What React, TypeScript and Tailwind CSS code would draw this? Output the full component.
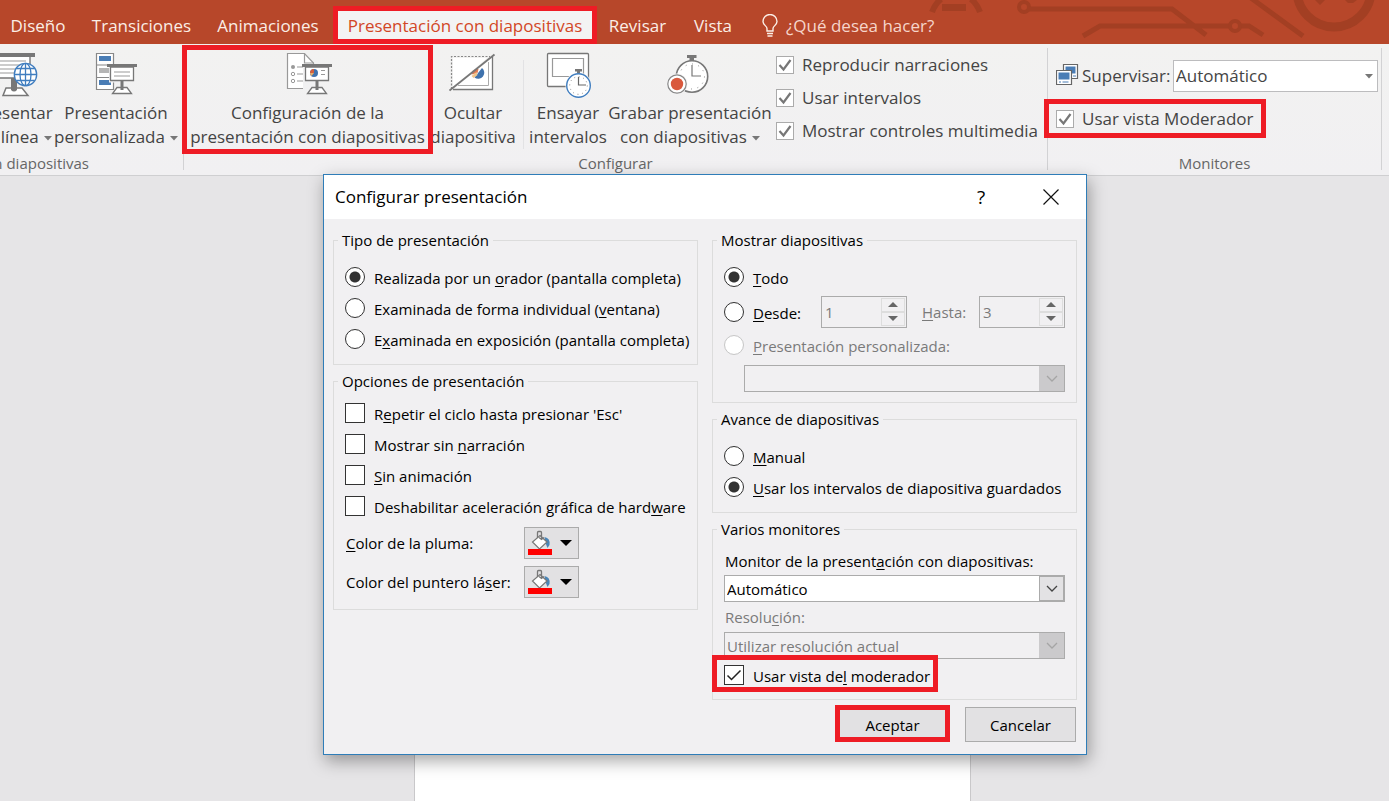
import React from "react";
import clsx from "clsx";

function Highlight({ className }: { className: string }) {
  return (
    <span
      aria-hidden="true"
      className={clsx("pointer-events-none absolute z-10 border-[5px] border-[#ee1c25]", className)}
    />
  );
}

function Board({ x, y }: { x: number; y: number }) {
  return (
    <g transform={`translate(${x} ${y})`}>
      <path d="M10 23.500h10l4.500 6H5.500z" fill="#fff" stroke="#777" strokeWidth="1.300" />
      <path d="M13.500 17h3v9h-3z" fill="#777" />
      <path d="M3.500 3h23v13.500h-23z" fill="#fff" stroke="#777" strokeWidth="1.300" />
      <path d="M0 0h30v3H0z" fill="#777" />
    </g>
  );
}

function RibbonIcon({ children }: { children: React.ReactNode }) {
  return (
    <svg width="48" height="48" viewBox="0 0 48 48" fill="none" aria-hidden="true" className="shrink-0">
      {children}
    </svg>
  );
}

const OnlineIcon = () => (
  <RibbonIcon>
    <path d="M16 36h16l6 7.500H13z" fill="#fff" stroke="#777" strokeWidth="1.500" />
    <path d="M21 26h6v12q-3 3-6 0z" fill="#777" />
    <path d="M6 4h34v22H6z" fill="#fff" stroke="#777" strokeWidth="1.400" />
    <path d="M3 1h42v4H3z" fill="#777" />
    <path d="M10 9h26M10 13h22M10 17h18M10 21h16" stroke="#999" />
    <g stroke="#3f7dbf" strokeWidth="1.300" fill="#fff">
      <circle cx="35.500" cy="22.500" r="11.200" />
      <ellipse cx="35.500" cy="22.500" rx="5.500" ry="11.200" />
      <path d="M35.500 11.300v22.400M24.300 22.500h22.400M26.500 16.500h18M26.500 28.500h18" />
    </g>
  </RibbonIcon>
);

const CustomShowIcon = () => (
  <RibbonIcon>
    <path d="M4.500 1.500h17v36h-17z" fill="#fff" stroke="#888" strokeWidth="1.200" />
    <path d="M4.500 13h17M4.500 25.500h17" stroke="#888" strokeWidth="1.200" />
    <path d="M7 4h12v5H7zM7 28h12v5H7z" fill="#4a7db5" />
    <path d="M7 16h11v5H7z" fill="#b5b5b5" />
    <path d="M17 14.500h13v16H17z" fill="#f1f1f2" />
    <Board x={15} y={12} />
    <path d="M22 20h16M22 24h16" stroke="#999" />
  </RibbonIcon>
);

const SetupIcon = () => (
  <RibbonIcon>
    <path d="M3.500 1.500h17l9 9.500v25.500h-26z" fill="#fff" stroke="#999" strokeWidth="1.200" />
    <path d="M20.500 1.500V11h9" stroke="#999" strokeWidth="1.200" />
    <path d="M19 15h12v22.500H19z" fill="#f1f1f2" />
    <circle cx="9" cy="15" r="2" fill="#999" />
    <circle cx="9" cy="22" r="1.700" stroke="#999" />
    <circle cx="9" cy="29" r="1.700" stroke="#999" />
    <path d="M13 15h6M13 22h6M13 29h6" stroke="#999" />
    <Board x={18} y={12} />
    <circle cx="30" cy="21" r="4" fill="#3f72ad" />
    <path d="M30 21v-4a4 4 0 0 0-4 4z" fill="#d35f3e" />
    <path d="M30 21h-4a4 4 0 0 0 1.500 3z" fill="#e8b06a" />
    <path d="M37 18.500h4M37 22.500h4" stroke="#999" />
  </RibbonIcon>
);

const HideIcon = () => (
  <RibbonIcon>
    <path d="M2.500 37V4.500H41" stroke="#888" strokeWidth="1.200" strokeDasharray="2 1.500" />
    <path d="M4 36V6h34z" fill="#fff" />
    <path d="M44 4v33.500H4z" fill="#fff" />
    <path d="M43.500 5v32.500H4" stroke="#777" strokeWidth="1.300" />
    <path d="M39.500 10v23.500H9" stroke="#aaa" />
    <path d="M33 16a6 6 0 1 1-7.500 9.500z" fill="#3f72ad" />
    <path d="M22.500 22.500a6 6 0 0 1 7-5.500l-1 4z" fill="#e07a52" />
    <path d="M22.500 24l5-4 1 3-4 3z" fill="#efc58c" />
    <path d="M0.500 38.500L45.500 2.500" stroke="#777" strokeWidth="1.800" />
  </RibbonIcon>
);

const RehearseIcon = () => (
  <RibbonIcon>
    <rect x="3.500" y="1.500" width="41" height="33" rx="1" fill="#fff" stroke="#777" strokeWidth="1.300" />
    <path d="M8.500 6.500h31v18h-31z" stroke="#999" strokeWidth="1.200" />
    <circle cx="34.500" cy="33.500" r="13" fill="#f4f4f5" />
    <path d="M31 17h7v2.500h-2v2h-3v-2h-2z" fill="#777" />
    <circle cx="34.500" cy="33.500" r="11.800" fill="#fff" stroke="#3f7dbf" strokeWidth="1.400" />
    <circle cx="34.500" cy="33.500" r="8.800" stroke="#888" strokeDasharray="1 3.600" />
    <path d="M34.500 25v8H42" stroke="#666" strokeWidth="1.200" />
  </RibbonIcon>
);

const RecordIcon = () => (
  <RibbonIcon>
    <path d="M21 3h9.500v3H28v3h-4.500V6H21z" fill="#777" />
    <circle cx="26" cy="24.500" r="15.700" fill="#fff" stroke="#777" strokeWidth="1.600" />
    <circle cx="26" cy="24.500" r="12.500" stroke="#888" strokeDasharray="1 5.500" />
    <path d="M26 13v11h9" stroke="#777" strokeWidth="1.200" />
    <circle cx="11" cy="32" r="10.500" fill="#f4f4f5" />
    <circle cx="11" cy="32" r="9.200" fill="#fff" stroke="#888" strokeWidth="1.200" />
    <circle cx="11" cy="32" r="6.200" fill="#d9593d" />
  </RibbonIcon>
);

function Caret() {
  return (
    <svg width="8" height="5" viewBox="0 0 8 5" aria-hidden="true" className="ml-[5px] inline-block align-middle">
      <path d="M0 0h8L4 4.500z" fill="#777" />
    </svg>
  );
}

function RibbonButton(props: {
  icon: React.ReactNode;
  top: string;
  bottom: string;
  caret?: boolean;
  className?: string;
  highlight?: boolean;
}) {
  return (
    <button
      type="button"
      className={clsx(
        "relative flex shrink-0 flex-col items-center whitespace-nowrap pt-2 text-[17px] leading-6 text-[#444444]",
        props.className
      )}
    >
      {props.icon}
      <span className="pt-px">{props.top}</span>
      <span>
        {props.bottom}
        {props.caret && <Caret />}
      </span>
      {props.highlight && <Highlight className="inset-x-[-2px] top-px bottom-[-5px]" />}
    </button>
  );
}

function RibbonCheck({ label, id }: { label: string; id: string }) {
  return (
    <div className="flex h-[33px] items-center gap-2 whitespace-nowrap text-[17px] text-[#444444]">
      <span className="grid">
        <input
          id={id}
          type="checkbox"
          defaultChecked
          className="peer size-[18px] appearance-none border border-[#ababab] bg-white [grid-area:1/1]"
        />
        <svg
          viewBox="0 0 18 18"
          aria-hidden="true"
          className="pointer-events-none invisible size-[18px] [grid-area:1/1] peer-checked:visible"
        >
          <path d="M3.500 9l4 4.500L14.500 4" fill="none" stroke="#777" strokeWidth="2.200" />
        </svg>
      </span>
      <label htmlFor={id}>{label}</label>
    </div>
  );
}

function GroupLabel({ children, className }: { children: string; className?: string }) {
  return (
    <div className={clsx("mt-auto flex h-6 items-center whitespace-nowrap text-[15px] text-[#666666]", className)}>
      {children}
    </div>
  );
}

function Circuit() {
  return (
    <svg
      width="490"
      height="44"
      viewBox="899 0 490 44"
      fill="none"
      stroke="#a33f23"
      strokeWidth="5"
      aria-hidden="true"
      className="pointer-events-none absolute top-0 right-0"
    >
      <path d="M932 12q3-8 9-13M980 12q-3-8-9-13" strokeWidth="6" />
      <path d="M942 4h24v7h-24z" fill="#a33f23" stroke="none" />
      <circle cx="1024" cy="7" r="5" strokeWidth="4" />
      <path d="M1029 9h143l34 26M1083 36l17-10h130M1241 26h8l14 9M1251-2l52 38" />
      <circle cx="1235" cy="26" r="5" strokeWidth="4" />
      <circle cx="1334" cy="-10" r="37" strokeWidth="9" />
      <path d="M1315 0h10l-5 5zM1345 0h12l-4 3h-5z" fill="#a33f23" stroke="none" />
    </svg>
  );
}

function Tab({ label, className }: { label: string; className: string }) {
  return (
    <button type="button" role="tab" className={clsx("h-[37px] shrink-0 whitespace-nowrap", className)}>
      {label}
    </button>
  );
}

function Group(props: { title: string; className?: string; children: React.ReactNode }) {
  return (
    <fieldset className={clsx("min-w-0 border border-[#dcdcdc] px-[11px]", props.className)}>
      <legend className="-ml-[7px] px-1 leading-5">{props.title}</legend>
      {props.children}
    </fieldset>
  );
}

function Key({ text }: { text: string }) {
  const [before, key, after] = text.split("_");
  return (
    <>
      {before}
      <span className="underline underline-offset-2">{key}</span>
      {after}
    </>
  );
}

function Radio(props: { id: string; name: string; text: string; checked?: boolean; disabled?: boolean; className?: string }) {
  return (
    <div className={clsx("flex items-center gap-[9px] whitespace-nowrap", props.className ?? "h-[31px]")}>
      <input
        id={props.id}
        type="radio"
        name={props.name}
        defaultChecked={props.checked}
        disabled={props.disabled}
        className="size-5 shrink-0 appearance-none rounded-full border border-[#333333] bg-white bg-clip-padding checked:bg-[radial-gradient(circle,#333333_5px,white_6px)] disabled:border-[#c8c8c8]"
      />
      <label htmlFor={props.id} className={clsx("pt-[2px]", props.disabled && "text-[#7a7a7a]")}>
        <Key text={props.text} />
      </label>
    </div>
  );
}

function Check(props: { id: string; text: string; checked?: boolean }) {
  return (
    <div className="flex h-[31px] items-center gap-[9px] whitespace-nowrap">
      <span className="grid">
        <input
          id={props.id}
          type="checkbox"
          defaultChecked={props.checked}
          className="peer size-5 appearance-none border border-[#333333] bg-white [grid-area:1/1]"
        />
        <svg
          viewBox="0 0 20 20"
          aria-hidden="true"
          className="pointer-events-none invisible size-5 [grid-area:1/1] peer-checked:visible"
        >
          <path d="M3.500 10.500l4 4L16.500 5.500" fill="none" stroke="#222" strokeWidth="1.500" />
        </svg>
      </span>
      <label htmlFor={props.id} className="pt-[2px]">
        <Key text={props.text} />
      </label>
    </div>
  );
}

function Spinner({ id, value, label }: { id: string; value: string; label?: string }) {
  return (
    <div className="flex h-8 w-[86px] shrink-0 border border-[#ababab] p-px text-[#7a7a7a]">
      <input
        id={id}
        type="text"
        defaultValue={value}
        aria-label={label}
        disabled
        className="w-full min-w-0 flex-1 bg-transparent pl-[2px]"
      />
      <div className="flex w-6 flex-col">
        {["M0 5h10L5 0z", "M0 0h10L5 5z"].map((d, i) => (
          <button
            key={d}
            type="button"
            disabled
            aria-label={i === 0 ? "Aumentar" : "Disminuir"}
            className="flex flex-1 items-center justify-center border border-[#dddddd]"
          >
            <svg width="10" height="5" viewBox="0 0 10 5" aria-hidden="true">
              <path d={d} fill="#666" />
            </svg>
          </button>
        ))}
      </div>
    </div>
  );
}

function Combo(props: { id: string; value: string; disabled?: boolean; className?: string; label?: string }) {
  return (
    <div
      className={clsx(
        "grid h-[27px] border border-[#ababab]",
        props.disabled ? "text-[#7a7a7a]" : "bg-white",
        props.className
      )}
    >
      <select
        id={props.id}
        disabled={props.disabled}
        aria-label={props.label}
        className="w-full appearance-none pl-[2px] opacity-100 [grid-area:1/1]"
      >
        <option>{props.value}</option>
      </select>
      <span
        className={clsx(
          "pointer-events-none flex w-[25px] items-center justify-center justify-self-end [grid-area:1/1]",
          props.disabled ? "bg-[#cbcacc] text-[#a5a5a5]" : "border border-[#ababab] bg-[#e3e2e4] text-[#444444]"
        )}
      >
        <svg width="12" height="7" viewBox="0 0 12 7" aria-hidden="true">
          <path d="M1 1l5 5 5-5" fill="none" stroke="currentColor" strokeWidth="1.300" />
        </svg>
      </span>
    </div>
  );
}

function ColorRow({ id, text }: { id: string; text: string }) {
  return (
    <div className="flex h-[39px] items-center pl-px">
      <label htmlFor={id} className="w-[178px] whitespace-nowrap">
        <Key text={text} />
      </label>
      <button
        id={id}
        type="button"
        className="flex h-8 w-[55px] items-center gap-2 border border-[#ababab] bg-[#e2e1e3] pl-[3px]"
      >
        <svg width="24" height="26" viewBox="0 0 24 26" aria-hidden="true">
          <path d="M16.500 7q6 1 5 8l-2 3-2-5z" fill="#4a86b8" />
          <path d="M12 5.500l7 6.500-7.500 7-7-7z" fill="#fff" stroke="#777" strokeWidth="1.200" />
          <path d="M9.500 8V2.500q0-1 1-1h2q1 0 1 1V9M11 7.500l2.500 2 2.500-2" fill="none" stroke="#777" strokeWidth="1.300" />
          <path d="M0 19h24v6H0z" fill="#fe0000" />
        </svg>
        <svg width="12" height="6" viewBox="0 0 12 6" aria-hidden="true">
          <path d="M0 0h12L6 6z" fill="#000" />
        </svg>
      </button>
    </div>
  );
}

function Dialog() {
  return (
    <div
      role="dialog"
      aria-labelledby="dialog-title"
      className="absolute top-[174px] left-[323px] w-[764px] border border-[#2f7db8] bg-[#f1f0f2] text-[15px] leading-5 text-black shadow-[2px_6px_16px_rgba(0,0,0,0.35)]"
    >
      <div className="flex h-11 items-center bg-white pl-[11px]">
        <h1 id="dialog-title" className="flex-1 text-[17px]">
          Configurar presentación
        </h1>
        <button type="button" aria-label="Ayuda" className="w-[70px] text-center text-[19px]">
          ?
        </button>
        <button type="button" aria-label="Cerrar" className="flex h-11 w-[70px] items-center justify-center">
          <svg width="16" height="16" viewBox="0 0 16 16" aria-hidden="true">
            <path d="M0.500 0.500l15 15M15.500 0.500l-15 15" stroke="#111" strokeWidth="1.200" />
          </svg>
        </button>
      </div>

      <div className="grid grid-cols-2 items-start gap-[14px] px-[9px] pt-[11px]">
        <div className="flex flex-col gap-[6px]">
          <Group title="Tipo de presentación" className="pt-[11px] pb-[10px]">
            <Radio id="t1" name="tipo" checked text="Realizada por un _o_rador (pantalla completa)" />
            <Radio id="t2" name="tipo" text="Examinada de forma individual (_v_entana)" />
            <Radio id="t3" name="tipo" text="E_x_aminada en exposición (pantalla completa)" />
          </Group>
          <Group title="Opciones de presentación" className="pt-[6px] pb-[8px]">
            <Check id="o1" text="R_e_petir el ciclo hasta presionar 'Esc'" />
            <Check id="o2" text="Mostrar sin _n_arración" />
            <Check id="o3" text="_S_in animación" />
            <Check id="o4" text="Deshabilitar aceleración gráfica de hard_w_are" />
            <div className="pt-[2px]">
              <ColorRow id="c1" text="_C_olor de la pluma:" />
              <ColorRow id="c2" text="Color del puntero lá_s_er:" />
            </div>
          </Group>
        </div>

        <div className="flex flex-col gap-[6px]">
          <Group title="Mostrar diapositivas" className="pt-[11px] pb-[10px]">
            <Radio id="m1" name="mostrar" checked text="_T_odo" />
            <div className="flex h-[39px] items-center">
              <Radio id="m2" name="mostrar" text="_D_esde:" className="h-[31px] w-[97px]" />
              <Spinner id="desde" value="1" label="Desde" />
              <label htmlFor="hasta" className="ml-[15px] w-[57px] text-[#7a7a7a]">
                <Key text="_H_asta:" />
              </label>
              <Spinner id="hasta" value="3" />
            </div>
            <Radio id="m3" name="mostrar" disabled text="_P_resentación personalizada:" className="h-7" />
            <Combo id="custom" value="" disabled label="Presentación personalizada" className="mt-[6px] ml-5" />
          </Group>
          <Group title="Avance de diapositivas" className="pt-[11px] pb-[10px]">
            <Radio id="a1" name="avance" text="_M_anual" />
            <Radio id="a2" name="avance" checked text="_U_sar los intervalos de diapositiva guardados" />
          </Group>
          <Group title="Varios monitores" className="pt-2 pb-[9px]">
            <label htmlFor="monitor" className="flex h-7 items-center pl-px">
              <span>
                <Key text="Monitor de la present_a_ción con diapositivas:" />
              </span>
            </label>
            <Combo id="monitor" value="Automático" />
            <label htmlFor="resolucion" className="flex h-[30px] items-center pl-px text-[#7a7a7a]">
              <span>
                <Key text="Resolu_c_ión:" />
              </span>
            </label>
            <Combo id="resolucion" value="Utilizar resolución actual" disabled />
            <div className="relative">
              <Check id="moderador" checked text="Usar vista de_l_ moderador" />
              <Highlight className="-top-1 -bottom-[2px] -left-3 w-[226px]" />
            </div>
          </Group>
        </div>
      </div>

      <div className="flex justify-end gap-[17px] px-[10px] pt-[7px] pb-3">
        <button type="button" className="relative h-[35px] w-[111px] bg-[#e2e1e3]">
          Aceptar
          <Highlight className="-inset-x-[2px] -top-[2px] bottom-0" />
        </button>
        <button type="button" className="h-[35px] w-[111px] border border-[#ababab] bg-[#e2e1e3]">
          Cancelar
        </button>
      </div>
    </div>
  );
}

export default function App() {
  return (
    <div className="relative flex min-h-screen flex-col overflow-hidden bg-[#e6e5e7] font-['Open_Sans',sans-serif]">
      <header
        role="tablist"
        className="relative flex h-11 items-end bg-[#b7472a] text-[17px] text-[#fbeee6]"
      >
        <Circuit />
        <Tab label="Diseño" className="w-[76px]" />
        <Tab label="Transiciones" className="w-[131px]" />
        <Tab label="Animaciones" className="w-[122px]" />
        <div className="relative ml-1 flex">
          <Tab label="Presentación con diapositivas" className="w-[264px] bg-[#f3f3f3] text-[#d24726]" />
          <Highlight className="inset-x-0 -top-px bottom-0" />
        </div>
        <Tab label="Revisar" className="w-[81px]" />
        <Tab label="Vista" className="w-[70px]" />
        <div className="flex h-[37px] items-center gap-2 pl-[14px]">
          <svg width="16" height="24" viewBox="0 0 16 24" fill="none" stroke="#fbeee6" strokeWidth="1.400" aria-hidden="true">
            <path d="M5 17v-2.500C5 12 1 11 1 7.500a7 7 0 0 1 14 0C15 11 11 12 11 14.500V17z" />
            <path d="M5 19.500h6M5.500 22h5" />
          </svg>
          <button type="button" className="whitespace-nowrap text-[#f6d5ca]">
            ¿Qué desea hacer?
          </button>
        </div>
      </header>

      <section className="flex h-[132px] border-b border-[#cfcfd1] bg-gradient-to-b from-[#f2f2f1] to-[#f1f0f2]">
        <div className="flex w-[183px] shrink-0 flex-col">
          <div className="flex">
            <RibbonButton icon={<OnlineIcon />} top="Presentar" bottom="en línea" caret className="-ml-[24px] w-[76px]" />
            <RibbonButton icon={<CustomShowIcon />} top="Presentación" bottom="personalizada" caret className="w-[128px]" />
          </div>
          <GroupLabel className="w-[89px] justify-end">con diapositivas</GroupLabel>
        </div>

        <div className="mt-1 mb-[5px] w-px shrink-0 bg-[#d2d2d4]" />

        <div className="flex w-[863px] shrink-0 flex-col">
          <div className="flex">
            <RibbonButton
              icon={<SetupIcon />}
              top="Configuración de la"
              bottom="presentación con diapositivas"
              highlight
              className="w-[247px]"
            />
            <RibbonButton icon={<HideIcon />} top="Ocultar" bottom="diapositiva" className="w-[84px]" />
            <div className="mt-4 ml-2 w-px bg-[#e2e2e4]" />
            <RibbonButton icon={<RehearseIcon />} top="Ensayar" bottom="intervalos" className="ml-[6px] w-[76px]" />
            <RibbonButton
              icon={<RecordIcon />}
              top="Grabar presentación"
              bottom="con diapositivas"
              caret
              className="ml-[2px] w-[164px]"
            />
            <div className="ml-1 flex flex-col pt-1">
              <RibbonCheck id="r1" label="Reproducir narraciones" />
              <RibbonCheck id="r2" label="Usar intervalos" />
              <RibbonCheck id="r3" label="Mostrar controles multimedia" />
            </div>
          </div>
          <GroupLabel className="justify-center">Configurar</GroupLabel>
        </div>

        <div className="mt-1 mb-[5px] w-px shrink-0 bg-[#d2d2d4]" />

        <div className="flex w-[333px] shrink-0 flex-col">
          <div className="flex items-center pt-4 pr-[3px] pl-2 text-[17px] text-[#444444]">
            <svg width="23" height="24" viewBox="0 0 23 24" aria-hidden="true" className="shrink-0">
              <path d="M7.500 0.500h14v14h-14z" fill="#fff" stroke="#666" strokeWidth="1.200" />
              <path d="M9.500 2.500h10v7h-10z" fill="#4a7db5" />
              <path d="M0.500 6.500h15v14h-15z" fill="#fff" stroke="#666" strokeWidth="1.200" />
              <path d="M2.500 8.500h11v7h-11z" fill="#4a7db5" />
              <path d="M3 18h2M6.500 18h6M17 12h3" stroke="#4a7db5" />
            </svg>
            <label htmlFor="supervisar" className="w-[94px] shrink-0 pl-[3px] whitespace-nowrap">
              Supervisar:
            </label>
            <div className="grid h-8 flex-1 items-center border border-[#bcbcbe] bg-white">
              <select id="supervisar" className="h-full w-full appearance-none pl-[2px] [grid-area:1/1]">
                <option>Automático</option>
              </select>
              <svg
                width="8"
                height="5"
                viewBox="0 0 8 5"
                aria-hidden="true"
                className="pointer-events-none mr-1 justify-self-end [grid-area:1/1]"
              >
                <path d="M0 0h8L4 4.500z" fill="#777" />
              </svg>
            </div>
          </div>
          <div className="relative mt-[10px] ml-2 self-start">
            <RibbonCheck id="r4" label="Usar vista Moderador" />
            <Highlight className="-top-[3px] -bottom-[3px] -left-3 w-[222px]" />
          </div>
          <GroupLabel className="justify-center">Monitores</GroupLabel>
        </div>

        <div className="mt-1 mb-[5px] w-px shrink-0 bg-[#d2d2d4]" />
      </section>

      <main className="flex flex-1">
        <div className="mt-10 ml-[414px] w-[557px] border-x border-[#c9c8ca] bg-white" />
      </main>

      <Dialog />
    </div>
  );
}
